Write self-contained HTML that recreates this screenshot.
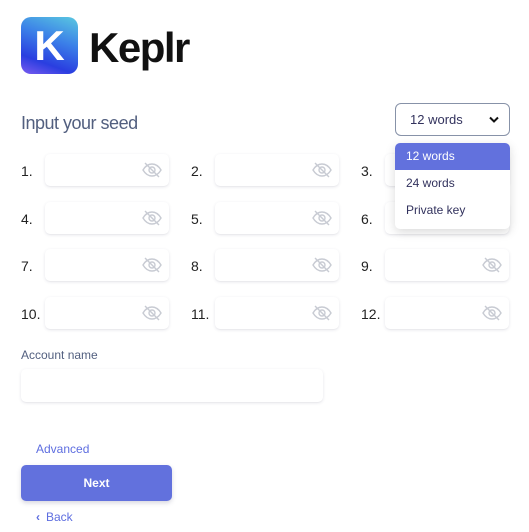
<!DOCTYPE html>
<html><head><style>
body{margin:0;width:529px;height:532px;background:#fff;font-family:"Liberation Sans",sans-serif;position:relative;overflow:hidden}
.a{position:absolute}
.logo{left:21px;top:17px;width:57px;height:57px;border-radius:10px;background:linear-gradient(200deg,#5ac8e0 0%,#3b7fe8 40%,#2a3ee0 75%,#7b5cf0 100%);color:#fff;font-weight:bold;font-size:42px;line-height:57px;text-align:center}
.brand{left:89px;top:18px;font-size:42px;font-weight:bold;color:#111;letter-spacing:-1.5px;line-height:60px}
.title{left:21px;top:113px;font-size:18px;color:#525f7f;letter-spacing:-0.5px}
.lbl{font-size:14px;color:#222}
.inp{width:124px;height:32px;border-radius:5px;background:#fff;box-shadow:0 1px 3px rgba(50,50,93,.12),0 1px 0 rgba(0,0,0,.02)}
.inp svg{position:absolute;right:7px;top:8px}
</style></head><body>
<div class="a logo">K</div>
<div class="a brand">Keplr</div>
<div class="a title">Input your seed</div>

<div id="g"></div>
<script>
var xs=[[21,45],[191,215],[361,385]],ys=[154,202,249,297],h='';
var eye='<svg width="20" height="16" viewBox="0 0 20 16" fill="none" stroke="#c8cbd3" stroke-width="1.4"><path d="M1 8C4 3 7 2 10 2s6 1 9 6c-3 5-6 6-9 6S4 13 1 8z"/><circle cx="10" cy="8" r="3"/><path d="M3 1l14 14"/></svg>';
for(var r=0;r<4;r++)for(var c=0;c<3;c++){var n=r*3+c+1;
h+='<div class="a lbl" style="left:'+xs[c][0]+'px;top:'+(ys[r]+9)+'px">'+n+'.</div>';
h+='<div class="a inp" style="left:'+xs[c][1]+'px;top:'+ys[r]+'px">'+eye+'</div>';}
document.getElementById('g').innerHTML=h;
</script>

<div class="a" style="left:395px;top:103px;width:113px;height:31px;border:1px solid #8792a8;border-radius:6px;font-size:13px;color:#32325d;line-height:31px;text-indent:14px">12 words
<svg style="position:absolute;right:10px;top:12px" width="10" height="8" viewBox="0 0 10 8"><path d="M1 1.5l4 4 4-4" stroke="#111" stroke-width="2" fill="none"/></svg></div>
<div class="a" style="left:395px;top:143px;width:115px;height:86px;background:#fff;border-radius:5px;box-shadow:0 3px 10px rgba(0,0,0,.15);font-size:12px;color:#32325d;overflow:hidden">
<div style="height:27px;line-height:27px;background:#6271dd;color:#fff;padding-left:11px">12 words</div>
<div style="height:27px;line-height:27px;padding-left:11px">24 words</div>
<div style="height:27px;line-height:27px;padding-left:11px">Private key</div>
</div>

<div class="a" style="left:21px;top:348px;font-size:12px;color:#525f7f">Account name</div>
<div class="a inp" style="left:21px;top:369px;width:302px;height:33px"></div>
<div class="a" style="left:36px;top:442px;font-size:12px;color:#5e6ee0">Advanced</div>
<div class="a" style="left:21px;top:465px;width:151px;height:36px;border-radius:5px;background:#6271dd;color:#fff;font-size:12px;font-weight:bold;text-align:center;line-height:36px;box-shadow:0 2px 5px rgba(50,50,93,.2)">Next</div>
<div class="a" style="left:36px;top:510px;font-size:12px;color:#5e6ee0"><span style="font-weight:bold;margin-right:6px">‹</span>Back</div>
</body></html>
